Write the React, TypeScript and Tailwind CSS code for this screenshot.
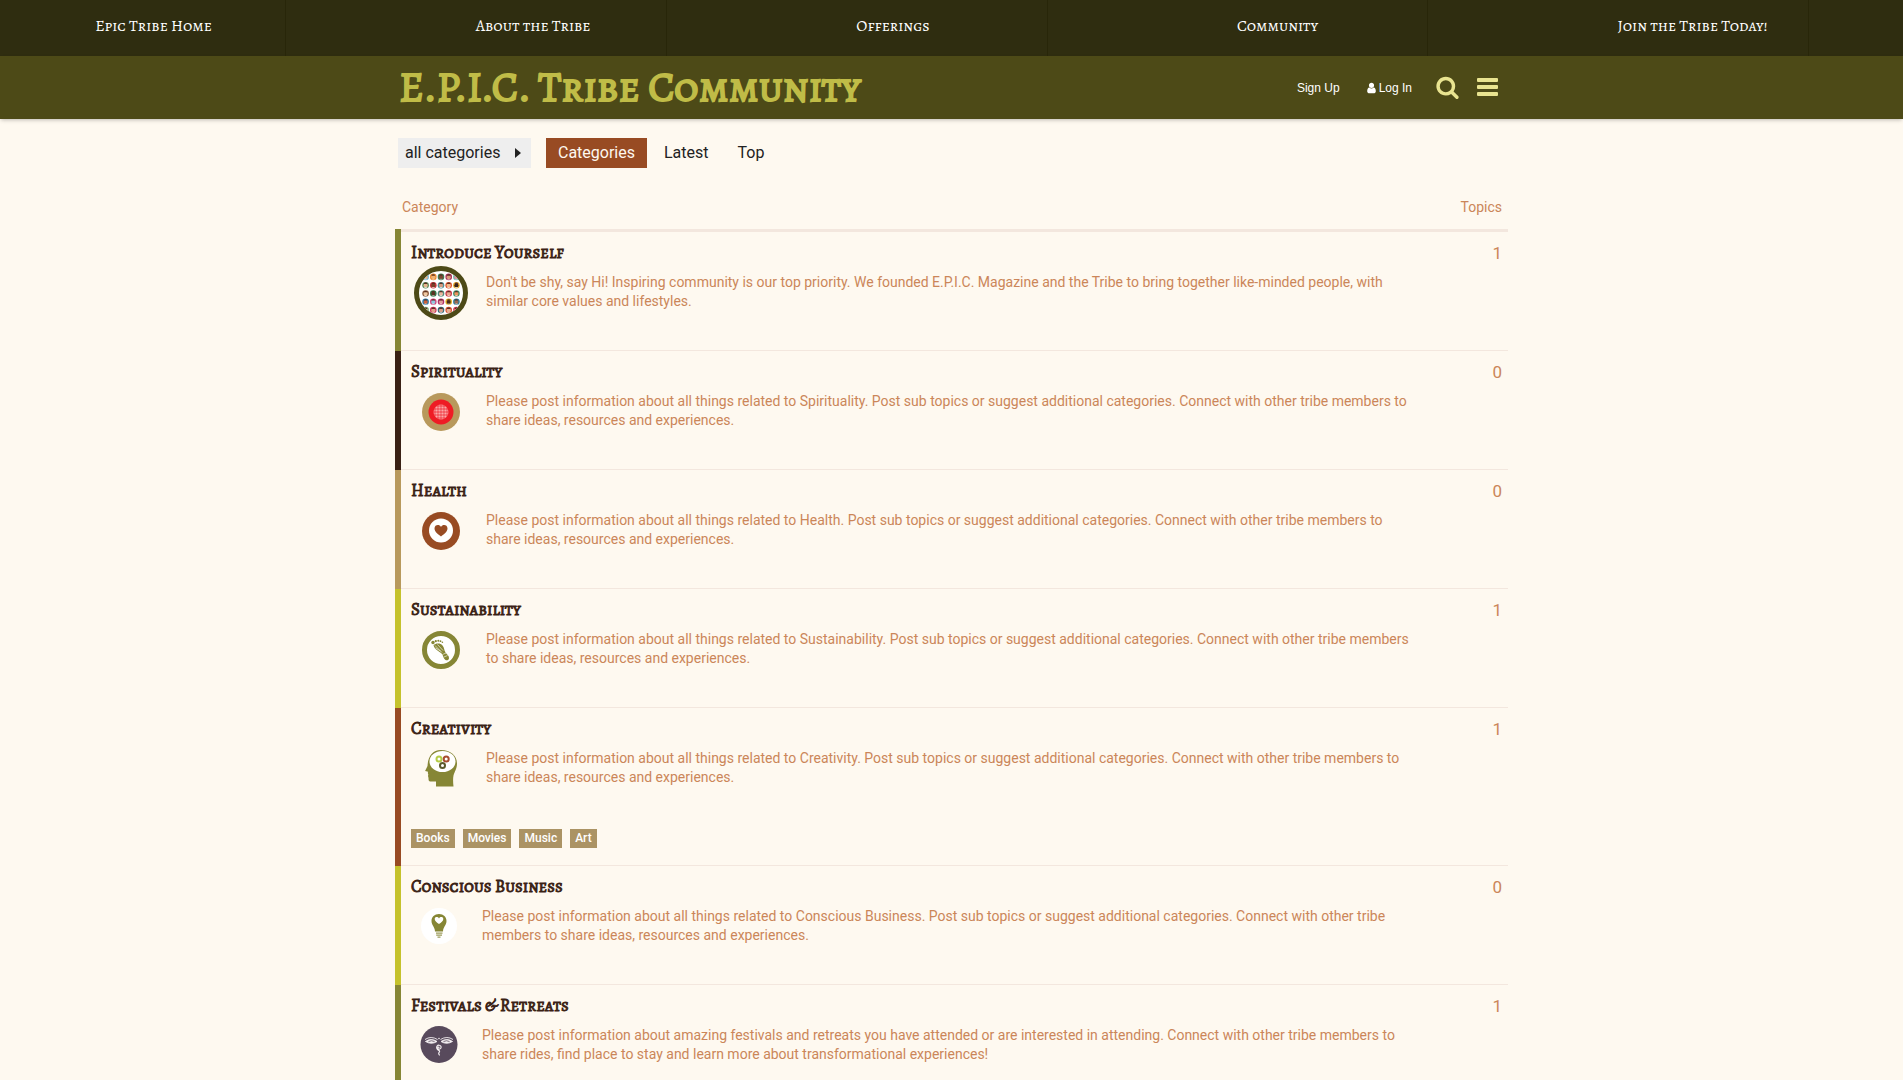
import type { ReactNode } from "react";

const serif = "font-['Alegreya_SC','Liberation_Serif',serif]";

const navItems = ["Epic Tribe Home", "About the Tribe", "Offerings", "Community", "Join the Tribe Today!"];

function SearchIcon() {
  return (
    <svg viewBox="0 0 1664 1792" className="h-6 w-[23px] fill-current" aria-hidden="true">
      <path d="M1152 832q0-185-131.5-316.5T704 384 387.5 515.5 256 832t131.5 316.5T704 1280t316.5-131.5T1152 832zm512 832q0 52-38 90t-90 38q-54 0-90-38l-343-342q-179 124-399 124-143 0-273.5-55.5t-225-150-150-225T0 832t55.5-273.5 150-225 225-150T704 128t273.5 55.5 225 150 150 225T1408 832q0 220-124 399l343 343q37 37 37 90z" />
    </svg>
  );
}

function MenuIcon() {
  return (
    <svg viewBox="0 0 21 18" className="h-[18px] w-[21px] fill-current" aria-hidden="true">
      <rect x="0" y="0" width="21" height="4" rx="1" />
      <rect x="0" y="7" width="21" height="4" rx="1" />
      <rect x="0" y="14" width="21" height="4" rx="1" />
    </svg>
  );
}

function UserIcon() {
  return (
    <svg viewBox="0 0 1280 1792" className="h-3 w-[9px] fill-current" aria-hidden="true">
      <path d="M1280 1399q0 109-62.5 187t-150.5 78H213q-88 0-150.5-78T0 1399q0-85 8.5-160.5t31.5-152 58.5-131 94-89T327 832q131 128 313 128t313-128q76 0 134.5 34.5t94 89 58.5 131 31.5 152 8.5 160.5zM1024 512q0 159-112.5 271.5T640 896 368.5 783.5 256 512t112.5-271.5T640 128t271.5 112.5T1024 512z" />
    </svg>
  );
}

const faces = [
  [1, 0, "#6db7d8", "#e8b48c"], [2, 0, "#e8862a", "#f0b070"], [3, 0, "#3f7a52", "#7a4630"], [4, 0, "#a8325a", "#d99a78"], [5, 0, "#6db7b0", "#e58a9a"],
  [1, 1, "#5b8a5a", "#e6b78f"], [2, 1, "#c8323c", "#7b3f2a"], [3, 1, "#4a8f9a", "#d59a80"], [4, 1, "#e0562f", "#f0b78c"], [5, 1, "#e8a92a", "#3a241a"],
  [1, 2, "#8a5a3c", "#f0c8a0"], [2, 2, "#2f7a4a", "#5a3322"], [3, 2, "#4e8a7c", "#e8b8a0"], [4, 2, "#c83a4a", "#e8a890"], [5, 2, "#3f8f6a", "#e8945a"],
  [1, 3, "#2a7fb0", "#c8603a"], [2, 3, "#d2407a", "#8fc8e0"], [3, 3, "#b02f6a", "#e09a9a"], [4, 3, "#e0b020", "#4a2c1c"], [5, 3, "#2f7f9a", "#9a6a52"],
  [1, 4, "#7fb07a", "#e8b890"], [2, 4, "#c8325a", "#e0a088"], [3, 4, "#2f6a7a", "#d8a088"], [4, 4, "#d8502f", "#e8b090"], [5, 4, "#d83a5a", "#f0b0a0"],
] as const;

function CommunityIcon() {
  return (
    <svg viewBox="0 0 60 60" className="size-[60px]" aria-hidden="true">
      <defs>
        <clipPath id="people"><circle cx="30" cy="30" r="22" /></clipPath>
      </defs>
      <circle cx="30" cy="30" r="24.5" fill="#fff" stroke="#4d4a17" strokeWidth="5" />
      <g clipPath="url(#people)">
        {faces.map(([col, row, ring, skin]) => {
          const x = 30 + (col - 3) * 7.7;
          const y = 30.5 + (row - 2) * 8.3;
          return (
            <g key={`${col}-${row}`}>
              <circle cx={x} cy={y} r="3.3" fill={ring} />
              <circle cx={x} cy={y + 0.3} r="2.1" fill={skin} />
              <path d={`M${x - 1.8} ${y - 1.2}a1.8 1.4 0 0 1 3.6 0z`} fill="#5a2f22" />
              <path d={`M${x - 2} ${y + 2.7}q2-1.8 4 0z`} fill="#fff" opacity=".7" />
            </g>
          );
        })}
      </g>
    </svg>
  );
}

function SpiritIcon() {
  return (
    <svg viewBox="0 0 60 60" className="size-[60px]" aria-hidden="true">
      <defs>
        <pattern id="seed" width="3" height="3" patternUnits="userSpaceOnUse">
          <rect width="3" height="3" fill="#f4525a" />
          <circle cx="1.5" cy="1.5" r="1.1" fill="#fba9a8" />
        </pattern>
      </defs>
      <circle cx="30" cy="30" r="19" fill="#b8995c" />
      <circle cx="30" cy="30" r="12.5" fill="#ee1c25" />
      <circle cx="30" cy="30" r="7.5" fill="url(#seed)" />
    </svg>
  );
}

function HeartIcon() {
  return (
    <svg viewBox="0 0 60 60" className="size-[60px]" aria-hidden="true">
      <circle cx="30" cy="30" r="19" fill="#984b23" />
      <circle cx="30" cy="29.5" r="12" fill="#fff" />
      <path d="M30 35.5c-2-1.700-6.500-4.300-6.500-8 0-4 5-4.500 6.500-1.500 1.500-3 6.500-2.500 6.500 1.500 0 3.700-4.500 6.300-6.500 8z" fill="#984b23" />
    </svg>
  );
}

function FootprintIcon() {
  return (
    <svg viewBox="0 0 60 60" className="size-[60px]" aria-hidden="true">
      <circle cx="30" cy="30" r="16.500" fill="#fff" stroke="#868635" strokeWidth="5" />
      <g fill="#868635">
        <path d="M22.500 25c2-1.500 6.500-2.500 9 .5 2 2.500 1.500 4.500 3 7 1.200 2 3.500 3 3.500 5.500 0 2-2 3-3.800 1.800-2-1.400-1.700-3.800-3.200-5.800-2-2.600-8-4.500-8.500-9z" />
        <circle cx="22" cy="22.500" r="1.700" />
        <circle cx="24.800" cy="21.200" r="1.100" />
        <circle cx="27.300" cy="20.700" r="1" />
        <circle cx="29.500" cy="21.200" r=".9" />
        <circle cx="31.400" cy="22.300" r=".8" />
      </g>
      <path d="M24 25.500l7 7M26.500 24.500l5.500 6M24.500 28l5 3M31.500 34.500l3.500-1.500M33 37l3.500-1.500" stroke="#fff" strokeWidth=".6" />
    </svg>
  );
}

function MindIcon() {
  return (
    <svg viewBox="0 0 60 60" className="size-[60px]" aria-hidden="true">
      <path d="M30 11c9.500 0 16 5.500 16 13.500 0 5-2.500 8-3.500 12-.6 3-.5 7 0 11H25v-5h-5.500c-2 0-2-1.500-2-3.500l-.5-2 .3-1.500-.5-1.500.3-1.200-3-.8 2.400-5c.5-9 4.500-16 13.500-16z" fill="#868635" />
      <ellipse cx="31.500" cy="22.500" rx="13" ry="10.500" fill="#fff" />
      <circle cx="28" cy="20" r="2.500" fill="none" stroke="#b5cc46" strokeWidth="2" />
      <circle cx="35.200" cy="20" r="2.500" fill="none" stroke="#a84e30" strokeWidth="2" />
      <circle cx="31.500" cy="26.500" r="2.500" fill="none" stroke="#5b5a2c" strokeWidth="2" />
    </svg>
  );
}

function BulbIcon() {
  return (
    <svg viewBox="0 0 56 56" className="size-14" aria-hidden="true">
      <circle cx="28" cy="29" r="18" fill="#fff" />
      <path d="M28 17c4.500 0 7.500 3 7.500 7 0 4.500-3.300 5.500-3.500 10.500h-8c-.2-5-3.500-6-3.500-10.500 0-4 3-7 7.500-7z" fill="#868635" />
      <path d="M28 27c-2-1.500-4.300-2.800-4.300-5 0-2.300 3.200-2.600 4.300-.6 1.100-2 4.300-1.700 4.300.6 0 2.200-2.300 3.500-4.300 5z" fill="#fff" />
      <path d="M25 36.200h6.500M25.200 38.200h5.800M26.500 40.200h3" stroke="#9a9a58" strokeWidth="1.200" />
    </svg>
  );
}

function EyesIcon() {
  return (
    <svg viewBox="0 0 56 56" className="size-14" aria-hidden="true">
      <circle cx="28" cy="28.500" r="18.500" fill="#584a5c" />
      <g fill="none" stroke="#f3eef0" strokeWidth=".9">
        <path d="M14 23.500q6-4 12.500 0M42 23.500q-6-4-12.500 0" />
        <path d="M14.500 25.500q5.500-4 11.500 0-5.500 3.500-11.500 0zM41.500 25.500q-5.500-4-11.500 0 5.500 3.500 11.500 0z" fill="#f3eef0" />
        <path d="M28.500 31.500a1 1 0 1 0-.8 1.600c2 .2 2.800-1.600 2.200-2.800s-2.800-1.600-3.800-.2-.2 3.400 1.200 4 1.600 1.400.8 2.200-.4 2 .6 3" strokeWidth="1.200" />
      </g>
      <path d="M17.500 25.500q3-1.500 6 0M32.500 25.500q3-1.500 6 0" stroke="#584a5c" strokeWidth=".8" fill="none" />
      <circle cx="28" cy="22.500" r=".8" fill="#f3eef0" />
    </svg>
  );
}

type Category = { name: string; topics: number; edge: string; icon: ReactNode; text: string; tags?: string[] };

const related = (topic: string) =>
  `Please post information about all things related to ${topic}. Post sub topics or suggest additional categories. Connect with other tribe members to share ideas, resources and experiences.`;

const categories: Category[] = [
  {
    name: "Introduce Yourself", topics: 1, edge: "border-l-[#868635]", icon: <CommunityIcon />,
    text: "Don't be shy, say Hi! Inspiring community is our top priority. We founded E.P.I.C. Magazine and the Tribe to bring together like-minded people, with similar core values and lifestyles.",
  },
  { name: "Spirituality", topics: 0, edge: "border-l-[#3a2114]", icon: <SpiritIcon />, text: related("Spirituality") },
  { name: "Health", topics: 0, edge: "border-l-[#b8995c]", icon: <HeartIcon />, text: related("Health") },
  { name: "Sustainability", topics: 1, edge: "border-l-[#c5c22c]", icon: <FootprintIcon />, text: related("Sustainability") },
  { name: "Creativity", topics: 1, edge: "border-l-[#984b23]", icon: <MindIcon />, text: related("Creativity"), tags: ["Books", "Movies", "Music", "Art"] },
  { name: "Conscious Business", topics: 0, edge: "border-l-[#c5c22c]", icon: <BulbIcon />, text: related("Conscious Business") },
  {
    name: "Festivals & Retreats", topics: 1, edge: "border-l-[#868635]", icon: <EyesIcon />,
    text: "Please post information about amazing festivals and retreats you have attended or are interested in attending. Connect with other tribe members to share rides, find place to stay and learn more about transformational experiences!",
  },
];

function CategoryRow({ category }: { category: Category }) {
  return (
    <tr className="border-b border-[#f3e7de]">
      <td className={`border-l-[6px] pt-[11px] pr-1 pl-[10px] align-top ${category.tags ? "pb-[17px]" : "pb-[27px]"} ${category.edge}`}>
        <h3 className={`${serif} text-[17px] leading-5 font-normal text-[#3a2114] [-webkit-text-stroke:0.05em]`}>
          <a href="#">{category.name}</a>
        </h3>
        <div className="flex h-[60px] items-start gap-[15px]">
          <div className="shrink-0">{category.icon}</div>
          <p className="pt-[10px] text-sm leading-[19px]">{category.text}</p>
        </div>
        {category.tags && (
          <div className="mt-[30px] flex gap-2">
            {category.tags.map((tag) => (
              <a key={tag} href="#" className="bg-[#ab9364] px-[5px] text-xs leading-[19px] font-medium text-white">
                {tag}
              </a>
            ))}
          </div>
        )}
      </td>
      <td className="pt-[11px] pr-[6px] text-right align-top text-[17px] leading-[21px]">{category.topics}</td>
    </tr>
  );
}

export default function App() {
  return (
    <div className="min-h-screen bg-[#fef9f0] font-[Roboto,sans-serif] text-[#cb8659]">
      <nav className="flex h-14 bg-[#2f2d10]">
        {navItems.map((item) => (
          <div key={item} className="w-1/5">
            <a href="#" className={`${serif} box-content block h-full w-1/2 border-r border-[#282609] pl-[25%] text-base leading-[52px] whitespace-nowrap text-white`}>
              {item}
            </a>
          </div>
        ))}
      </nav>

      <header className="bg-[#4d4a17] shadow-[0_2px_4px_-1px_rgba(0,0,0,0.25)]">
        <div className="mx-auto flex h-[63px] max-w-[1113px] items-center pr-[10px] pl-1">
          <h1 className={`${serif} pb-[2px] text-[42px] leading-[60px] font-normal text-[#c0bc47] [-webkit-text-stroke:0.045em]`}>
            <a href="#">E.P.I.C. Tribe Community</a>
          </h1>
          <div className="ml-auto flex items-center font-['Liberation_Sans',sans-serif] text-xs text-white">
            <button type="button">Sign Up</button>
            <button type="button" className="ml-[27px] flex items-center gap-[3px]">
              <UserIcon />
              Log In
            </button>
            <button type="button" aria-label="Search" className="ml-6 pb-[2px] text-[#e9e490]"><SearchIcon /></button>
            <button type="button" aria-label="Menu" className="ml-[18px] pb-[2px] text-[#e9e490]"><MenuIcon /></button>
          </div>
        </div>
      </header>

      <main className="mx-auto max-w-[1113px] pt-[19px]">
        <div className="flex pl-[3px] text-base leading-[30px] text-[#222]">
          <button type="button" className="flex w-[133px] items-center justify-between bg-[#eee] pr-[10px] pl-[7px]">
            all categories
            <svg viewBox="0 0 6 10" className="h-[10px] w-[6px] fill-current" aria-hidden="true"><path d="M0 0l6 5-6 5z" /></svg>
          </button>
          <a href="#" className="ml-[15px] bg-[#984b23] px-3 text-[#fef9f0]">Categories</a>
          <a href="#" className="ml-[5px] px-3">Latest</a>
          <a href="#" className="ml-[5px] px-3">Top</a>
        </div>

        <table className="mt-[23px] w-full border-collapse">
          <thead>
            <tr className="border-b-[3px] border-[#f3e7de] text-sm">
              <th className="h-[39px] pl-1 text-left align-top font-normal leading-8">Category</th>
              <th className="w-[90px] pr-[6px] text-right align-top font-normal leading-8">Topics</th>
            </tr>
          </thead>
          <tbody>
            {categories.map((category) => (
              <CategoryRow key={category.name} category={category} />
            ))}
          </tbody>
        </table>
      </main>
    </div>
  );
}
